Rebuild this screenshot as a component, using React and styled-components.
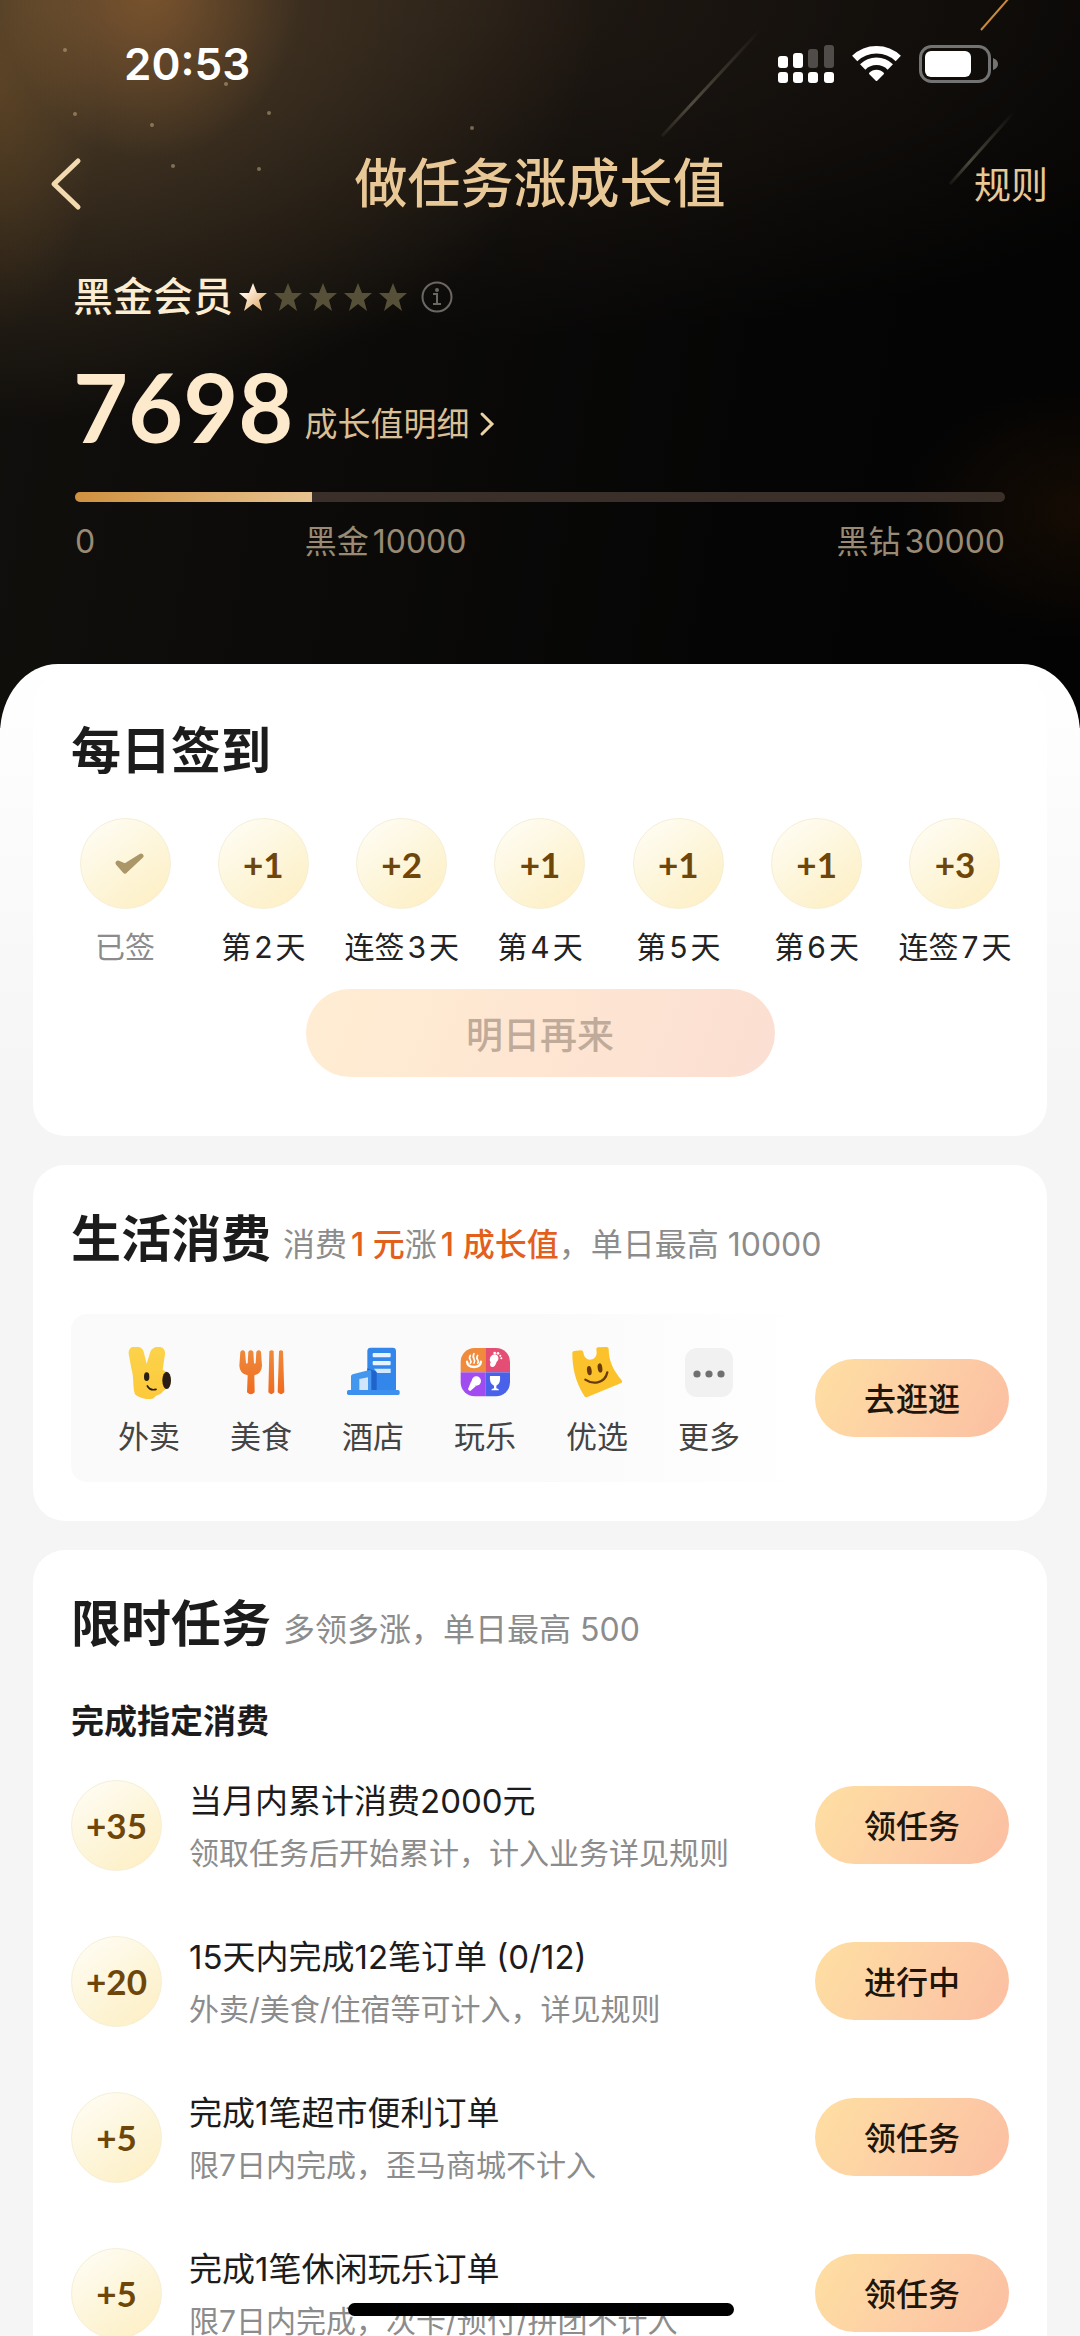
import styled, {createGlobalStyle} from "styled-components";

const GlobalStyle = createGlobalStyle`
  * {
    box-sizing: border-box;
  }
  body {
    margin: 0;
    background: #f5f5f5;
    font-family: Inter, "Noto Sans CJK SC", sans-serif;
    color: #1c1c1c;
  }
  button {
    font-family: inherit;
    border: none;
    padding: 0;
    background: none;
    cursor: pointer;
  }
  h1, h2, h3, p, ul {
    margin: 0;
    padding: 0;
    list-style: none;
  }
  a {
    color: inherit;
    text-decoration: none;
  }
`

const Page = styled.div`
  height: 100vh;
  overflow-y: auto;
  scrollbar-width: none;
  background: #f5f5f5;
`

const Hero = styled.header`
  position: relative;
  padding-bottom: 166px;
  margin-bottom: -64px;
  background:
    radial-gradient(ellipse 150px 170px at 150px -10px, rgba(170, 110, 55, 0.5), transparent),
    radial-gradient(ellipse 100px 240px at 0px 90px, rgba(120, 84, 40, 0.4), transparent),
    radial-gradient(ellipse 560px 420px at 40px 0px, rgba(100, 78, 50, 0.75), transparent),
    radial-gradient(ellipse 900px 340px at 460px 0px, rgba(50, 38, 28, 0.6), transparent),
    radial-gradient(ellipse 180px 130px at 100% 510px, rgba(38, 20, 4, 0.5), transparent),
    linear-gradient(100deg, #12100d, #050505 70%, #030303);
`

const Sky = styled.svg`
  position: absolute;
  top: 0;
  left: 0;
  width: 100%;
  height: 260px;
`

const StatusBar = styled.div`
  position: relative;
  display: flex;
  align-items: center;
  justify-content: space-between;
  height: 128px;
  padding: 0 82px 0 124px;
`

const Clock = styled.span`
  font-size: 44px;
  font-weight: 600;
  color: white;
`

const StatusIcons = styled.div`
  display: flex;
  align-items: center;
  gap: 18px;
`

const NavBar = styled.nav`
  position: relative;
  display: grid;
  grid-template-columns: 1fr auto 1fr;
  align-items: center;
  height: 112px;
  padding: 0 32px;
  color: #e8c897;
`

const BackButton = styled.button`
  justify-self: start;
  display: flex;
  padding: 0 16px;
`

const Title = styled.h1`
  font-size: 53px;
  font-weight: 500;
  line-height: 64px;
`

const RulesLink = styled.a`
  justify-self: end;
  padding-top: 4px;
  font-size: 37px;
  line-height: 48px;
`

const Member = styled.section`
  position: relative;
  padding: 0 75px 0 73px;
`

const LevelRow = styled.div`
  display: flex;
  align-items: center;
  height: 48px;
  margin-top: 33px;
`

const LevelName = styled.span`
  margin-right: 6px;
  font-size: 40px;
  font-weight: 500;
  line-height: 48px;
  color: #fbecd2;
`

const Stars = styled.div`
  display: flex;
  gap: 7px;
  margin-right: 14px;
`

const ScoreRow = styled.div`
  display: flex;
  align-items: flex-end;
  gap: 11px;
  margin-top: 37px;
`

const Score = styled.strong`
  font-family: Lato, sans-serif;
  font-size: 95px;
  font-weight: 700;
  line-height: 96px;
  color: #fdeacd;
`

const DetailLink = styled.a`
  display: flex;
  align-items: center;
  gap: 10px;
  padding-bottom: 10px;
  font-size: 33px;
  line-height: 40px;
  color: #d9bf95;
`

const Track = styled.div`
  height: 10px;
  margin: 38px 0 0 2px;
  border-radius: 5px;
  background: #3a3029;
  overflow: hidden;
`

const Fill = styled.div`
  height: 100%;
  background: linear-gradient(90deg, #d0913f, #e6c390);
`

const Marks = styled.div`
  display: flex;
  margin: 20px 0 0 2px;
  font-size: 32px;
  line-height: 40px;
  color: #998a73;
`

const Mark = styled.span`
  display: flex;
  gap: 4px;
  width: ${(props) => props.$width || "auto"};
  margin-left: ${(props) => (props.$last ? "auto" : "0")};
`

const Sheet = styled.main`
  position: relative;
  display: flex;
  flex-direction: column;
  gap: 29px;
  margin-top: -39px;
  padding: 13px 33px 0;
  border-radius: 58px 58px 0 0 / 70px 70px 0 0;
  background: linear-gradient(white, #fdfdfd 80px, #f5f5f5 440px);
`

const Card = styled.section`
  padding: 44px 38px ${(props) => props.$bottom}px;
  border-radius: 32px;
  background: white;
`

const CardHead = styled.div`
  display: flex;
  align-items: flex-end;
  gap: 12px;
`

const CardTitle = styled.h2`
  font-size: 50px;
  font-weight: 700;
  line-height: 60px;
`

const CardHint = styled.p`
  display: flex;
  font-size: 32px;
  line-height: 48px;
  color: #8c8c8c;
`

const Hot = styled.em`
  padding-left: 4px;
  font-style: normal;
  font-weight: 500;
  color: #e2601c;
`

const Coin = styled.span`
  flex: none;
  display: flex;
  align-items: center;
  justify-content: center;
  width: 91px;
  height: 91px;
  border: 1px solid #f6efd6;
  border-radius: 50%;
  background: linear-gradient(145deg, #fffcf2 10%, #fdf6db 50%, #feeec2);
  font-family: Lato, sans-serif;
  font-size: 35px;
  font-weight: 700;
  color: #6f4609;
`

const Days = styled.ul`
  display: flex;
  justify-content: space-between;
  margin-top: 37px;
`

const Day = styled.li`
  display: flex;
  flex-direction: column;
  align-items: center;
  gap: 18px;
  width: 108px;
  font-size: 30px;
  line-height: 40px;
  white-space: nowrap;
  color: ${(props) => (props.$done ? "#8b8b8b" : "#222")};
`

const DayLabel = styled.span`
  display: flex;
  gap: 3px;
`

const SignButton = styled.button`
  display: block;
  width: 50%;
  height: 88px;
  margin: 22px auto 0;
  border-radius: 44px;
  background: linear-gradient(110deg, #ffedd2, #fee6d2 50%, #fbdfd2);
  font-size: 37px;
  font-weight: 500;
  color: #c0ab9b;
`

const Shops = styled.div`
  display: flex;
  align-items: center;
  justify-content: space-between;
  margin-top: 45px;
  padding-left: 22px;
  border-radius: 16px;
  background: linear-gradient(90deg, #fafafa 50%, white 78%);
`

const ShopList = styled.ul`
  display: flex;
  padding: 33px 0 25px;
`

const Shop = styled.a`
  display: flex;
  flex-direction: column;
  align-items: center;
  gap: 18px;
  width: 112px;
  font-size: 31px;
  line-height: 40px;
  color: #444;
`

const PillButton = styled.button`
  flex: none;
  width: 194px;
  height: 78px;
  padding-bottom: 3px;
  border-radius: 39px;
  background: linear-gradient(120deg, #fedca2 10%, #fdcfa5 50%, #fbc0a2 95%);
  font-size: 32px;
  font-weight: 500;
  color: #20150a;
`

const SubTitle = styled.h3`
  margin: 47px 0 6px;
  font-size: 33px;
  font-weight: 600;
  line-height: 40px;
`

const Task = styled.li`
  display: flex;
  align-items: center;
  gap: 27px;
  height: 156px;
`

const TaskText = styled.div`
  flex: 1;
  padding-top: 3px;
  line-height: 52px;
  white-space: nowrap;
`

const TaskName = styled.p`
  font-size: 33px;
  color: #1c1c1c;
`

const TaskDesc = styled.p`
  font-size: 30px;
  color: #8c8c8c;
`

const HomeBar = styled.div`
  position: fixed;
  bottom: 20px;
  left: 50%;
  width: 386px;
  height: 13px;
  margin-left: -192px;
  border-radius: 7px;
  background: black;
`

const starPath = "M14 0 L18 10 L28 10 L20 17 L23 28 L14 21 L5 28 L8 17 L0 10 L10 10 Z";

const Star = ({lit}) => (
    <svg width="28" height="28" viewBox="0 0 28 28">
        <defs>
            <linearGradient id="starGold" x1="0" y1="0" x2="1" y2="1">
                <stop offset="0.3" stopColor="#fff0dc"/>
                <stop offset="0.9" stopColor="#dfa768"/>
            </linearGradient>
        </defs>
        <path d={starPath} fill={lit ? "url(#starGold)" : "#575039"}/>
    </svg>
)

const Signal = () => (
    <svg width="56" height="40" viewBox="0 0 56 40" fill="white">
        <rect x="0" y="12" width="10" height="12" rx="3"/>
        <rect x="15" y="9" width="10" height="15" rx="3"/>
        <rect x="30" y="5" width="10" height="19" rx="3" opacity="0.25"/>
        <rect x="46" y="1" width="10" height="23" rx="3" opacity="0.25"/>
        <rect x="0" y="28" width="10" height="11" rx="3"/>
        <rect x="15" y="28" width="10" height="11" rx="3"/>
        <rect x="30" y="28" width="10" height="11" rx="3"/>
        <rect x="46" y="28" width="10" height="11" rx="3"/>
    </svg>
)

const Wifi = () => (
    <svg width="49" height="38" viewBox="0 0 49 38" fill="none" stroke="white">
        <path d="M2.7 13.5 A31.5 31.5 0 0 1 46.3 13.5" strokeWidth="7.5"/>
        <path d="M10.7 22 A19.5 19.5 0 0 1 38.3 22" strokeWidth="7.5"/>
        <path d="M18 28.5 A9 9 0 0 1 31 28.5 L24.5 35 Z" fill="white" strokeWidth="2" strokeLinejoin="round"/>
    </svg>
)

const Battery = () => (
    <svg width="79" height="38" viewBox="0 0 79 38">
        <rect x="1.5" y="1.5" width="69" height="35" rx="11" fill="none" stroke="#737373" strokeWidth="3"/>
        <rect x="6" y="6" width="46" height="26" rx="6" fill="white"/>
        <path d="M74 13 Q79 15 79 19 Q79 23 74 25 Z" fill="#737373"/>
    </svg>
)

const Takeaway = () => (
    <svg width="52" height="52" viewBox="0 0 156 156">
        <defs>
            <linearGradient id="hareYellow" x1="0" y1="0" x2="0" y2="1">
                <stop offset="0" stopColor="#fbd34b"/>
                <stop offset="1" stopColor="#fdc93a"/>
            </linearGradient>
        </defs>
        <path d="M17 20 C14 -8 56 -8 62 14 L71 50 L82 14 C90 -8 130 -6 126 22 L119 68 C136 76 146 90 143 106 C140 124 122 128 116 138 C108 144 98 144 92 154 C74 160 48 154 36 142 C28 118 34 96 25 64 Z" fill="url(#hareYellow)"/>
        <ellipse cx="71" cy="89" rx="8" ry="13" fill="#2a1d16"/>
        <ellipse cx="131" cy="100" rx="13" ry="26" fill="#2a1d16"/>
        <path d="M73 117 Q82 132 99 127" fill="none" stroke="#2a1d16" strokeWidth="5" strokeLinecap="round"/>
    </svg>
)

const Food = () => (
    <svg width="52" height="52" viewBox="0 0 156 156">
        <defs>
            <linearGradient id="forkOrange" x1="0" y1="0" x2="0" y2="1">
                <stop offset="0" stopColor="#ee8a3c"/>
                <stop offset="1" stopColor="#f06a1e"/>
            </linearGradient>
        </defs>
        <g fill="url(#forkOrange)">
            <path d="M16 14 Q24 6 30 14 L33 48 Q36 52 38 48 L40 14 Q47 6 55 14 L57 48 Q60 52 62 48 L64 14 Q72 6 78 14 L81 56 Q80 80 58 85 L59 136 Q48 148 36 136 L38 85 Q14 80 13 56 Z"/>
            <path d="M103 13 Q110 7 116 13 L118 136 Q109 147 100 136 Z"/>
            <path d="M132 13 Q138 7 144 13 L148 136 Q138 147 128 136 Z"/>
        </g>
    </svg>
)

const Hotel = () => (
    <svg width="54" height="52" viewBox="0 0 162 156">
        <rect x="64" y="2" width="86" height="134" rx="10" fill="#3487ea"/>
        <path d="M64 64 L92 74 V134 H64 Z" fill="#1f63cb"/>
        <path d="M15 88 Q15 83 20 82 L70 69 Q76 68 76 74 V134 H15 Z" fill="#4497ee"/>
        <path d="M40 96 L66 91 V134 H40 Z" fill="#cfe6fb"/>
        <rect x="80" y="18" width="54" height="13" rx="3" fill="#e8f3ff"/>
        <rect x="80" y="42" width="54" height="13" rx="3" fill="#e8f3ff"/>
        <path d="M84 65 H134 V78 H94 Z" fill="#d3e7ff"/>
        <rect x="3" y="129" width="158" height="15" rx="5" fill="#3d90ee"/>
    </svg>
)

const Fun = () => (
    <svg width="52" height="52" viewBox="0 0 156 156">
        <defs>
            <clipPath id="funTile">
                <rect x="5" y="3" width="148" height="145" rx="42"/>
            </clipPath>
        </defs>
        <g clipPath="url(#funTile)">
            <rect x="0" y="0" width="79" height="76" fill="#f08a3c"/>
            <rect x="79" y="0" width="79" height="76" fill="#e54e74"/>
            <rect x="0" y="76" width="79" height="76" fill="#a04cf0"/>
            <rect x="79" y="76" width="79" height="76" fill="#4a62ea"/>
        </g>
        <g fill="none" stroke="white" strokeWidth="5" strokeLinecap="round">
            <path d="M34 25 q-5 8 0 13 q4 6 0 11"/>
            <path d="M45 20 q-5 9 0 16 q4 7 0 12"/>
            <path d="M56 25 q-5 8 0 13 q4 6 0 11"/>
            <path d="M24 44 Q26 60 45 60 Q64 60 66 44" strokeWidth="7"/>
        </g>
        <path d="M94 30 Q104 16 116 26 Q122 36 113 44 Q108 62 98 60 Q90 56 95 46 Q90 38 94 30 Z" fill="white"/>
        <circle cx="107" cy="18" r="4" fill="white"/>
        <circle cx="117" cy="19" r="4" fill="white"/>
        <circle cx="124" cy="26" r="3" fill="white"/>
        <circle cx="127" cy="34" r="3" fill="white"/>
        <circle cx="52" cy="102" r="14" fill="white"/>
        <path d="M37 102 L51 117 L34 132 Q26 130 28 124 Z" fill="white"/>
        <path d="M93 87 H123 Q126 110 112 116 V124 Q120 126 120 130 H97 Q97 126 105 124 V116 Q90 110 93 87 Z" fill="white"/>
    </svg>
)

const Select = () => (
    <svg width="52" height="52" viewBox="0 0 156 156">
        <path d="M4 18 Q3 13 9 12 L30 10 Q36 10 37 16 C40 48 76 42 77 18 L76 6 Q76 1 81 1 L106 0 Q113 0 113 5 C113 44 128 70 152 100 Q156 106 149 109 L49 150 Q43 153 40 147 C12 102 4 62 4 18 Z" fill="#fbc22c"/>
        <ellipse cx="55" cy="71" rx="7" ry="14" fill="#6a3a08" transform="rotate(-8 55 71)"/>
        <ellipse cx="87" cy="63" rx="7" ry="14" fill="#6a3a08" transform="rotate(-8 87 63)"/>
        <path d="M43 98 Q60 110 80 106 Q104 101 109 76" fill="none" stroke="#6a3a08" strokeWidth="7" strokeLinecap="round"/>
    </svg>
)

const More = () => (
    <svg width="52" height="52" viewBox="0 0 52 52">
        <rect x="2" y="1" width="48" height="49" rx="12" fill="#f1f1f1"/>
        <g fill="#707070">
            <circle cx="14" cy="27" r="3.6"/>
            <circle cx="26" cy="27" r="3.6"/>
            <circle cx="38" cy="27" r="3.6"/>
        </g>
    </svg>
)

const days = [
    {id: 1, label: ["已签"], done: true},
    {id: 2, label: ["第", "2", "天"], value: "+1"},
    {id: 3, label: ["连签", "3", "天"], value: "+2"},
    {id: 4, label: ["第", "4", "天"], value: "+1"},
    {id: 5, label: ["第", "5", "天"], value: "+1"},
    {id: 6, label: ["第", "6", "天"], value: "+1"},
    {id: 7, label: ["连签", "7", "天"], value: "+3"},
];

const shops = [
    {name: "外卖", Icon: Takeaway},
    {name: "美食", Icon: Food},
    {name: "酒店", Icon: Hotel},
    {name: "玩乐", Icon: Fun},
    {name: "优选", Icon: Select},
    {name: "更多", Icon: More},
];

const tasks = [
    {value: "+35", name: "当月内累计消费2000元", desc: "领取任务后开始累计，计入业务详见规则", action: "领任务"},
    {value: "+20", name: "15天内完成12笔订单 (0/12)", desc: "外卖/美食/住宿等可计入，详见规则", action: "进行中"},
    {value: "+5", name: "完成1笔超市便利订单", desc: "限7日内完成，歪马商城不计入", action: "领任务"},
    {value: "+5", name: "完成1笔休闲玩乐订单", desc: "限7日内完成，次卡/预付/拼团不计入", action: "领任务"},
];

const sparks = [[65, 50], [152, 125], [269, 113], [472, 128], [173, 166], [259, 169], [226, 84], [75, 114]];

const App = () => {
    const progress = 25.5;

    return (
        <Page>
            <GlobalStyle/>
            <Hero>
                <Sky viewBox="0 0 1080 260" preserveAspectRatio="xMinYMin meet">
                    <defs>
                        <linearGradient id="streak" x1="0" y1="1" x2="1" y2="0">
                            <stop offset="0" stopColor="#8a8570" stopOpacity="0.1"/>
                            <stop offset="0.3" stopColor="#8a8570" stopOpacity="0.5"/>
                            <stop offset="1" stopColor="#8a8570" stopOpacity="0"/>
                        </linearGradient>
                    </defs>
                    {sparks.map(([x, y]) => (
                        <circle key={x} cx={x} cy={y} r="2" fill="#c9b48c" opacity="0.5"/>
                    ))}
                    <path d="M662 136 L760 30" stroke="url(#streak)" strokeWidth="3"/>
                    <path d="M950 184 L1014 112" stroke="url(#streak)" strokeWidth="3"/>
                    <path d="M981 30 L1009 -2" stroke="#c98a3c" strokeWidth="2"/>
                </Sky>

                <StatusBar>
                    <Clock>20:53</Clock>
                    <StatusIcons>
                        <Signal/>
                        <Wifi/>
                        <Battery/>
                    </StatusIcons>
                </StatusBar>

                <NavBar>
                    <BackButton aria-label="返回">
                        <svg width="36" height="54" viewBox="0 0 36 54" fill="none" stroke="#f3d9ae" strokeWidth="5" strokeLinecap="round" strokeLinejoin="round">
                            <path d="M30 4 L6 27 L30 50"/>
                        </svg>
                    </BackButton>
                    <Title>做任务涨成长值</Title>
                    <RulesLink href="#rules">规则</RulesLink>
                </NavBar>

                <Member>
                    <LevelRow>
                        <LevelName>黑金会员</LevelName>
                        <Stars>
                            {[1, 2, 3, 4, 5].map((n) => <Star key={n} lit={n === 1}/>)}
                        </Stars>
                        <svg width="32" height="32" viewBox="0 0 32 32" fill="none" stroke="#6b6864" strokeWidth="2">
                            <circle cx="16" cy="16" r="14.5"/>
                            <path d="M12 13 H16 V23 M12 23 H20"/>
                            <circle cx="16" cy="9" r="1"/>
                        </svg>
                    </LevelRow>
                    <ScoreRow>
                        <Score>7698</Score>
                        <DetailLink href="#detail">
                            成长值明细
                            <svg width="16" height="26" viewBox="0 0 16 26" fill="none" stroke="#ecd3a6" strokeWidth="3" strokeLinecap="round">
                                <path d="M3 3 L13 13 L3 23"/>
                            </svg>
                        </DetailLink>
                    </ScoreRow>
                    <Track>
                        <Fill style={{width: `${progress}%`}}/>
                    </Track>
                    <Marks>
                        <Mark $width="24.7%">0</Mark>
                        <Mark><span>黑金</span><span>10000</span></Mark>
                        <Mark $last><span>黑钻</span><span>30000</span></Mark>
                    </Marks>
                </Member>
            </Hero>

            <Sheet>
                <Card $bottom={59}>
                    <CardTitle>每日签到</CardTitle>
                    <Days>
                        {days.map((day) => (
                            <Day key={day.id} $done={day.done}>
                                <Coin>
                                    {day.done ? (
                                        <svg width="38" height="24" viewBox="0 0 38 24">
                                            <path d="M12 11 L19 19 L35 4 L19 14 Z" fill="#ab9668" stroke="#ab9668" strokeWidth="5" strokeLinejoin="round"/>
                                        </svg>
                                    ) : day.value}
                                </Coin>
                                <DayLabel>
                                    {day.label.map((part) => <span key={part}>{part}</span>)}
                                </DayLabel>
                            </Day>
                        ))}
                    </Days>
                    <SignButton disabled>明日再来</SignButton>
                </Card>

                <Card $bottom={39}>
                    <CardHead>
                        <CardTitle>生活消费</CardTitle>
                        <CardHint>
                            消费<Hot>1 元</Hot>涨<Hot>1 成长值</Hot>，单日最高 10000
                        </CardHint>
                    </CardHead>
                    <Shops>
                        <ShopList>
                            {shops.map(({name, Icon}) => (
                                <li key={name}>
                                    <Shop href="#shop"><Icon/>{name}</Shop>
                                </li>
                            ))}
                        </ShopList>
                        <PillButton>去逛逛</PillButton>
                    </Shops>
                </Card>

                <Card $bottom={39}>
                    <CardHead>
                        <CardTitle>限时任务</CardTitle>
                        <CardHint>多领多涨，单日最高 500</CardHint>
                    </CardHead>
                    <SubTitle>完成指定消费</SubTitle>
                    <ul>
                        {tasks.map((task) => (
                            <Task key={task.name}>
                                <Coin>{task.value}</Coin>
                                <TaskText>
                                    <TaskName>{task.name}</TaskName>
                                    <TaskDesc>{task.desc}</TaskDesc>
                                </TaskText>
                                <PillButton>{task.action}</PillButton>
                            </Task>
                        ))}
                    </ul>
                </Card>
            </Sheet>
            <HomeBar/>
        </Page>
    )
}

export default App
